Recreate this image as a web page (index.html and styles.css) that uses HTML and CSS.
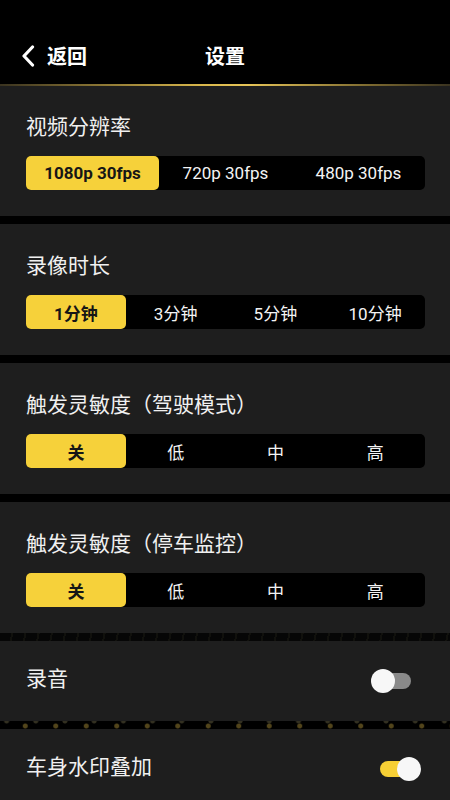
FILE: index.html
```html
<!DOCTYPE html>
<html lang="zh-CN">
<head>
<meta charset="utf-8">
<title>设置</title>
<link rel="stylesheet" href="styles.css">
</head>
<body>
<div class="page">
  <header class="header">
    <div class="back">
      <svg class="chev" width="14" height="22" viewBox="0 0 14 22"><path d="M11.5 2 L3 11 L11.5 20" fill="none" stroke="#fff" stroke-width="3.2" stroke-linecap="round" stroke-linejoin="round"/></svg>
      <span>返回</span>
    </div>
    <div class="title">设置</div>
    <div></div>
  </header>
  <div class="gold-line"></div>

  <section class="section first">
    <div class="label">视频分辨率</div>
    <div class="seg three">
      <div class="opt on">1080p 30fps</div>
      <div class="opt">720p 30fps</div>
      <div class="opt">480p 30fps</div>
    </div>
  </section>
  <div class="gap"></div>

  <section class="section">
    <div class="label">录像时长</div>
    <div class="seg">
      <div class="opt on">1分钟</div>
      <div class="opt">3分钟</div>
      <div class="opt">5分钟</div>
      <div class="opt">10分钟</div>
    </div>
  </section>
  <div class="gap"></div>

  <section class="section">
    <div class="label">触发灵敏度（驾驶模式）</div>
    <div class="seg">
      <div class="opt on">关</div>
      <div class="opt">低</div>
      <div class="opt">中</div>
      <div class="opt">高</div>
    </div>
  </section>
  <div class="gap"></div>

  <section class="section">
    <div class="label">触发灵敏度（停车监控）</div>
    <div class="seg">
      <div class="opt on">关</div>
      <div class="opt">低</div>
      <div class="opt">中</div>
      <div class="opt">高</div>
    </div>
  </section>
  <div class="gap stripes"></div>

  <div class="row">
    <span class="row-label">录音</span>
    <div class="switch off"><div class="track"></div><div class="knob"></div></div>
  </div>
  <div class="gap dots"></div>

  <div class="row">
    <span class="row-label">车身水印叠加</span>
    <div class="switch onsw"><div class="track"></div><div class="knob"></div></div>
  </div>
</div>
</body>
</html>
```

FILE: styles.css
```css
html, body {
  margin: 0;
  padding: 0;
  background: #000;
}
body {
  font-family: Roboto, "Noto Sans CJK SC", sans-serif;
  color: #f2f2f2;
  width: 450px;
  height: 800px;
  overflow: hidden;
}
.header {
  height: 84px;
  background: #000;
  display: grid;
  grid-template-columns: 1fr auto 1fr;
  align-items: center;
}
.back {
  display: flex;
  align-items: center;
  padding-left: 21px;
  padding-top: 27px;
  font-size: 20px;
  font-weight: 700;
  color: #fff;
}
.chev {
  margin-right: 12px;
}
.title {
  padding-top: 27px;
  font-size: 20px;
  font-weight: 700;
  color: #fff;
}
.gold-line {
  height: 2px;
  background: linear-gradient(90deg, #3a3320 0%, #7d6a30 18%, #d9b74c 45%, #e6c458 55%, #7d6a30 82%, #3a3320 100%);
}
.section {
  background: #1e1e1e;
  padding: 28px 25px 26px 26px;
}
.section.first {
  padding-top: 27px;
}
.label {
  font-size: 21px;
  line-height: 28px;
  color: #f0f0f0;
}
.seg {
  margin-top: 15px;
  height: 34px;
  background: #000;
  border-radius: 5px;
  display: grid;
  grid-template-columns: repeat(4, 1fr);
}
.seg.three {
  grid-template-columns: repeat(3, 1fr);
}
.opt {
  display: flex;
  align-items: center;
  justify-content: center;
  font-size: 17px;
  color: #f4f4f4;
}
.opt.on {
  background: #f6d13a;
  color: #161616;
  font-weight: 700;
  border-radius: 5px;
}
.gap {
  height: 8px;
  background: #000;
}
.gap.stripes {
  background-color: #060606;
  background-image: repeating-linear-gradient(100deg, transparent 0 11px, rgba(55, 54, 36, 0.22) 11px 13px);
}
.gap.dots {
  background-color: #000;
  background-image:
    radial-gradient(circle, rgba(110, 92, 36, 0.75) 0 2px, transparent 3px),
    radial-gradient(circle, rgba(85, 80, 55, 0.6) 0 2px, transparent 3px);
  background-size: 30.5px 8px, 29.2px 8px;
  background-position: 10px 1px, -8px -4px;
  background-repeat: repeat-x;
}
.row {
  height: 80px;
  background: #1e1e1e;
  display: flex;
  align-items: center;
  justify-content: space-between;
  padding: 0 29px 0 26px;
}
.row-label {
  font-size: 21px;
  line-height: 28px;
  margin-bottom: 4px;
  color: #f0f0f0;
}
.switch {
  position: relative;
  width: 50px;
  height: 24px;
}
.track {
  position: absolute;
  left: 9px;
  top: 4px;
  width: 31px;
  height: 16px;
  border-radius: 8px;
  background: #8a8a8a;
}
.knob {
  position: absolute;
  top: 0;
  width: 24px;
  height: 24px;
  border-radius: 50%;
  background: #f7f7f7;
}
.switch.off .knob {
  left: 0;
}
.switch.onsw .track {
  background: #f6cf35;
}
.switch.onsw .knob {
  right: 0;
}
```
